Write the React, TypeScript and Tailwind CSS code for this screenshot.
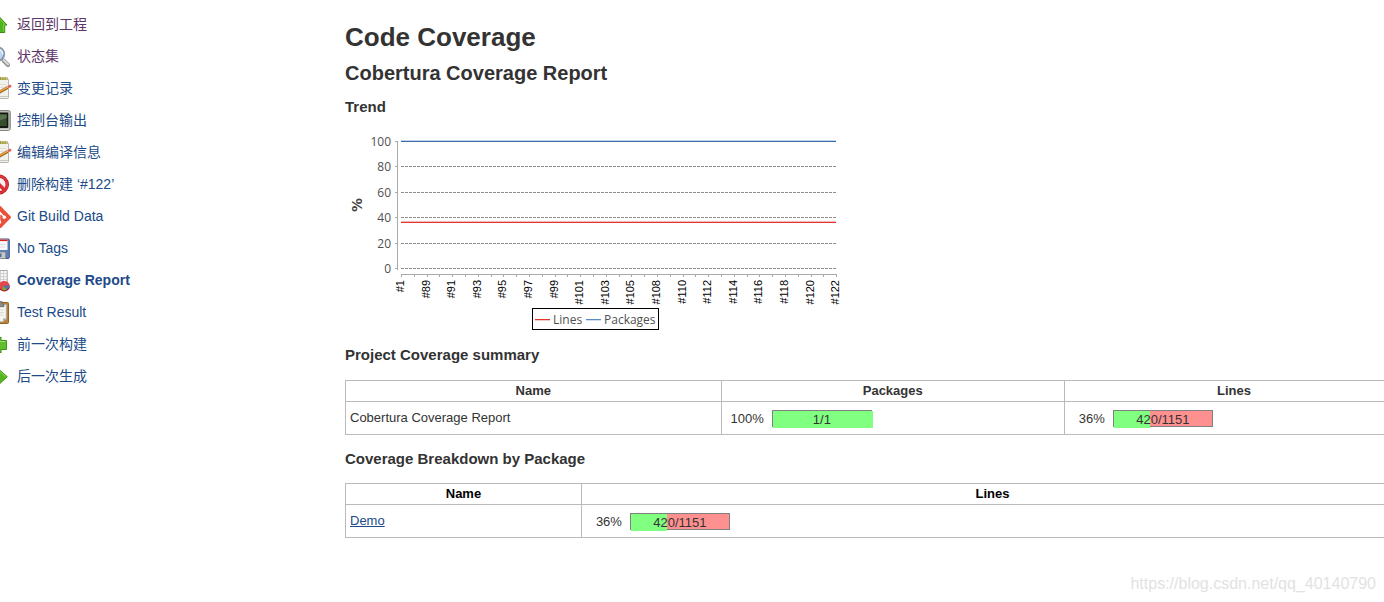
import { ReactNode } from 'react';

interface Task {
  label: string;
  icon: ReactNode;
  visited?: boolean;
  active?: boolean;
}

interface CoverageBarProps {
  percent: number;
  text: string;
}

const notepad = (
  <>
    <rect x="-12" y="3" width="20.5" height="19.5" rx="1" fill="#f1f1ec" stroke="#b5b5ae" />
    <path d="M0 20.5h8" stroke="#c9c9c4" />
    <path d="M0 2.5h7.5" stroke="#a29a2f" strokeWidth="3" strokeDasharray="1.5 .7" />
    <path d="M0 8.5h6M0 11.5h4" stroke="#dfdfda" />
    <path d="M-2 17L8.5 11" stroke="#8b5316" strokeWidth="3" />
    <path d="M-2 16.6L8.3 10.8" stroke="#eda13f" strokeWidth="1.8" />
    <path d="M7.6 11.4l1.5-.8" stroke="#d9d9d9" strokeWidth="2.8" />
    <path d="M9 10.6l1.2-.6" stroke="#e0625c" strokeWidth="2.6" strokeLinecap="round" />
  </>
);

const TASKS: Task[] = [
  {
    label: '返回到工程',
    visited: true,
    icon: (
      <>
        <path d="M-2 3.5L7 13H4.7v7.5H-7V13h-3z" fill="#4fb51c" stroke="#39880f" />
        <path d="M-2 5.2L5 12.3H3.7v7.2" stroke="#86d656" strokeWidth=".8" />
      </>
    ),
  },
  {
    label: '状态集',
    visited: true,
    icon: (
      <>
        <path d="M3.5 16.5l4.5 4.5" stroke="#8a8a8a" strokeWidth="4" strokeLinecap="round" />
        <path d="M3.5 16l4.5 4.5" stroke="#d8d8d8" strokeWidth="2.2" strokeLinecap="round" />
        <circle cx="-2.5" cy="10" r="6.7" fill="#b8d5f5" stroke="#8b95a5" strokeWidth="2" />
        <path d="M-1 5.5q4 1 3.6 5" stroke="#e7f2fd" strokeWidth="1.5" />
      </>
    ),
  },
  { label: '变更记录', icon: notepad },
  {
    label: '控制台输出',
    icon: (
      <>
        <rect x="-12" y="2.5" width="22.300" height="20" rx="2" fill="#b9bab5" stroke="#85877f" />
        <rect x="-10" y="4.500" width="18.300" height="15.500" rx="1" fill="#151a13" />
        <path d="M-8 6.500H6.700V18H-8z" fill="#344e2c" />
        <path d="M-8 6.500H6.700v3.500L0 12.500z" fill="#587250" />
        <path d="M0 21.300h9" stroke="#dededb" />
      </>
    ),
  },
  { label: '编辑编译信息', icon: notepad },
  {
    label: "删除构建 ‘#122’",
    icon: (
      <>
        <circle cx="-1" cy="12.500" r="8.300" fill="#fbeeee" stroke="#b9181d" strokeWidth="3.400" />
        <circle cx="-1" cy="12.500" r="8.300" stroke="#e0383d" strokeWidth="2" />
        <path d="M-7 6.500L5 18.500" stroke="#d93136" strokeWidth="3.400" />
      </>
    ),
  },
  {
    label: 'Git Build Data',
    icon: (
      <>
        <path d="M-1.500 1.300q.7-.6 1.400 0L10.700 12.400q.6.8 0 1.600L0 25h-2L-13 13z" fill="#ea5139" />
        <path d="M-4 5l9 8.500M-.5 9v10" stroke="#fff" strokeWidth="1.500" />
        <circle cx="-.5" cy="9.300" r="1.700" fill="#fff" />
        <circle cx="4.300" cy="13.300" r="1.800" fill="#fff" />
        <circle cx="-.5" cy="18" r="1.700" fill="#fff" />
      </>
    ),
  },
  {
    label: 'No Tags',
    icon: (
      <>
        <rect x="-12" y="3" width="21.300" height="19.500" rx="1" fill="#5b80b9" stroke="#3f5a8d" />
        <path d="M-8 3.500H7.500V14H-8z" fill="#fafafa" />
        <path d="M-8 4.300H7.500" stroke="#db2020" strokeWidth="1.600" />
        <path d="M-6 8.500H5.500M-6 11H5.500" stroke="#dedede" />
        <path d="M-5 16H5.500v6.500H-5z" fill="#c7c9c5" stroke="#8a8c89" strokeWidth=".8" />
        <path d="M-1 17.500H1.500V21H-1z" fill="#4d6d9f" />
      </>
    ),
  },
  {
    label: 'Coverage Report',
    active: true,
    icon: (
      <>
        <path d="M-12 2.500H7.200v18H-12z" fill="#f7f7f7" stroke="#a8a8a8" />
        <path d="M0 5.500h7M0 8.500h7M0 11.500h7M3.500 3v11M.5 3v16" stroke="#c9c9c9" strokeWidth=".8" />
        <ellipse cx="4.300" cy="18.800" rx="5.500" ry="4.700" fill="#a71619" />
        <ellipse cx="4.200" cy="17.500" rx="5.300" ry="4.500" fill="#e4474b" />
        <path d="M3.500 18.300l5.600-1.300q.3 3-2.600 4.700z" fill="#3f78c0" />
        <path d="M3.500 18.300l3 3.400q-2 1-4.300.3z" fill="#70b52d" />
      </>
    ),
  },
  {
    label: 'Test Result',
    icon: (
      <>
        <rect x="-12" y="2.500" width="20.500" height="21" rx="1" fill="#b98437" stroke="#8f6427" />
        <path d="M-9 4.500H6.300V19L3 21.700H-9z" fill="#f5f5f3" stroke="#aaa" strokeWidth=".7" />
        <path d="M6.300 18.500H3v3.200z" fill="#aaa" />
        <path d="M-4 1.500h6v2.200l2 1v2H-4z" fill="#8b8d88" stroke="#5e605b" strokeWidth=".7" />
        <path d="M0 10h4M0 12.500h4M0 15h4" stroke="#dadad7" />
      </>
    ),
  },
  {
    label: '前一次构建',
    icon: (
      <>
        <path d="M6.500 8.500v9H1V21l-9-8 9-8v3.500z" fill="#63bd31" stroke="#3f9414" />
        <path d="M0 9.500h5.500" stroke="#9bdc74" />
      </>
    ),
  },
  {
    label: '后一次生成',
    icon: (
      <>
        <path d="M-8 9h7V5.500l8.300 7.200L-1 20.300V17h-7z" fill="#55b51f" stroke="#3f9414" />
        <path d="M0 7.600l5.500 4.900" stroke="#8fd663" />
      </>
    ),
  },
];

const BUILDS = ['#1', '#89', '#91', '#93', '#95', '#97', '#99', '#101', '#103', '#105', '#108', '#110', '#112', '#114', '#116', '#118', '#120', '#122'];
const Y_TICKS = [100, 80, 60, 40, 20, 0];

const STEP = 12.8;
const LEFT = 56;
const RIGHT = 491;
const yOf = (value: number) => Math.round(138 - value * 1.27) + 0.5;

const TrendChart = () => (
  <svg width="500" height="200" viewBox="0 0 500 200" role="img" aria-label="Trend" className="block">
    <g fontFamily="'Open Sans', 'Noto Sans', sans-serif" fontSize="12" fill="#505050">
      {Y_TICKS.map((tick) => (
        <g key={tick}>
          <text x="46" y={yOf(tick) + 4.5} textAnchor="end">{tick}</text>
          <path d={`M50 ${yOf(tick)}h3`} stroke="#aaa" />
          {tick < 100 && <path d={`M${LEFT} ${yOf(tick)}H${RIGHT}`} stroke="#8c8c8c" strokeDasharray="3 1" />}
        </g>
      ))}
    </g>
    <text transform="translate(17 75) rotate(-90)" textAnchor="middle" fontFamily="'DejaVu Sans', sans-serif" fontSize="14" fontWeight="700" fill="#444">%</text>
    <path d="M52.5 11v129M56 144.5H492" stroke="#aaa" />

    {/* Series */}
    <path d={`M${LEFT} 10.5H${RIGHT}`} stroke="#c3d5ea" />
    <path d={`M${LEFT} ${yOf(100)}H${RIGHT}`} stroke="#3a6ca8" />
    <path d={`M${LEFT} 91.5H${RIGHT}`} stroke="#f2b9b9" />
    <path d={`M${LEFT} 92.5H${RIGHT}`} stroke="#e3342f" />

    {/* Build axis */}
    {Array.from({ length: 35 }, (_, i) => (
      <path key={i} d={`M${Math.round(LEFT + i * STEP) + 0.5} 145v2`} stroke="#aaa" />
    ))}
    <g fontFamily="'Liberation Sans', Arial, sans-serif" fontSize="11" fill="#000">
      {BUILDS.map((build, i) => (
        <text key={build} transform={`translate(${Math.round(LEFT + i * STEP * 2) + 3} 150) rotate(-90)`} textAnchor="end">
          {build}
        </text>
      ))}
    </g>

    {/* Legend */}
    <rect x="187.5" y="178.5" width="126" height="21" fill="#fff" stroke="#000" />
    <path d="M190 189.5h15" stroke="#e3342f" />
    <path d="M190 190.5h15" stroke="#f6c9c7" />
    <path d="M241 189.5h15" stroke="#5b8cc5" />
    <path d="M241 190.5h15" stroke="#cfdff0" />
    <g fontFamily="'Open Sans', 'Noto Sans', sans-serif" fontSize="12" fill="#505050">
      <text x="208" y="194">Lines</text>
      <text x="259" y="194">Packages</text>
    </g>
  </svg>
);

const CoverageBar = ({ percent, text }: CoverageBarProps) => (
  <div className="flex items-center gap-2 pl-[9px]">
    <span className="min-w-[31px] pt-px text-right">{percent}%</span>
    <div className="relative h-[17px] w-[100px] border border-[#808080] bg-[#ff9090]">
      <div className="absolute top-0 left-0 h-[17px] bg-[#80ff80]" style={{ width: `${percent}px` }} />
      <span className="relative block text-center leading-[17px]">{text}</span>
    </div>
  </div>
);

export default function App() {
  return (
    <div className="flex min-h-screen flex-col overflow-hidden bg-white font-['Liberation_Sans',Arial,'Noto_Sans_CJK_SC',sans-serif] text-[13px] text-[#333]">
      <div className="flex grow">
        <nav className="flex w-[345px] shrink-0 flex-col gap-2 pt-3 text-sm">
          {TASKS.map((task) => (
            <a key={task.label} href="#" className="flex h-6 items-center gap-[5px]">
              <svg width="12" height="24" viewBox="0 0 12 24" fill="none" aria-hidden="true" className="shrink-0">
                {task.icon}
              </svg>
              <span className={task.active ? 'font-bold text-[#204a87]' : task.visited ? 'text-[#5c3566]' : 'text-[#204a87]'}>
                {task.label}
              </span>
            </a>
          ))}
        </nav>

        {/* The report is wider than the window, its right edge runs off the page */}
        <main className="-mr-5 min-w-0 grow pt-5">
          <h1 className="text-[26px] leading-[34px] font-bold">Code Coverage</h1>
          <h2 className="mt-1 text-[20px] leading-[30px] font-bold">Cobertura Coverage Report</h2>
          <h3 className="mt-[9px] text-[15px] leading-5 font-bold">Trend</h3>
          <div className="mt-[13px]">
            <TrendChart />
          </div>

          <h3 className="mt-[15px] text-[15px] leading-5 font-bold">Project Coverage summary</h3>
          <table className="mt-[15px] w-full table-fixed border-collapse">
            <thead>
              <tr className="h-[21px]">
                <th className="w-[35.5%] border border-[#bbb] leading-5">Name</th>
                <th className="w-[32.45%] border border-[#bbb] leading-5">Packages</th>
                <th className="border border-[#bbb] leading-5">Lines</th>
              </tr>
            </thead>
            <tbody>
              <tr className="h-[33px]">
                <td className="border border-[#bbb] px-1">Cobertura Coverage Report</td>
                <td className="border border-[#bbb]"><CoverageBar percent={100} text="1/1" /></td>
                <td className="border border-[#bbb]"><CoverageBar percent={36} text="420/1151" /></td>
              </tr>
            </tbody>
          </table>

          <h3 className="mt-[14px] text-[15px] leading-5 font-bold">Coverage Breakdown by Package</h3>
          <table className="mt-[14px] w-full table-fixed border-collapse">
            <thead>
              <tr className="h-[21px] text-black">
                <th className="w-[22.3%] border border-[#bbb] leading-5">Name</th>
                <th className="border border-[#bbb] leading-5">Lines</th>
              </tr>
            </thead>
            <tbody>
              <tr className="h-[33px]">
                <td className="border border-[#bbb] px-1">
                  <a href="#" className="text-[#204a87] underline">Demo</a>
                </td>
                <td className="border border-[#bbb]"><CoverageBar percent={36} text="420/1151" /></td>
              </tr>
            </tbody>
          </table>
        </main>
      </div>
      <footer className="pr-2 pb-2 text-right text-base leading-5 text-[#e2e2e2]">https://blog.csdn.net/qq_40140790</footer>
    </div>
  );
}
